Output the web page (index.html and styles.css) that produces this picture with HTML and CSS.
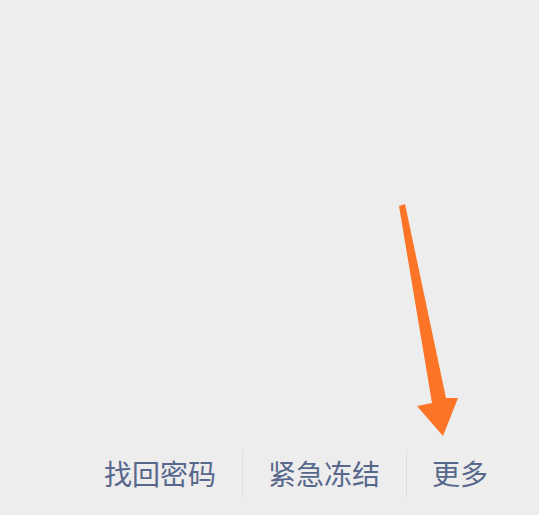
FILE: index.html
```html
<!DOCTYPE html>
<html lang="zh">
<head>
<meta charset="utf-8">
<link rel="stylesheet" href="styles.css">
</head>
<body>
<div class="page">
  <div class="spacer"></div>
  <nav class="links">
    <a class="link">找回密码</a>
    <a class="link">紧急冻结</a>
    <a class="link">更多</a>
  </nav>
  <svg class="arrow" width="539" height="515" viewBox="0 0 539 515">
    <polygon points="399,206 405,204 446,398 458,398 443,436 417,406 432,403" fill="#fc7526"/>
  </svg>
</div>
</body>
</html>
```
FILE: styles.css
```css
html, body {
  margin: 0;
  padding: 0;
  background: #ededed;
}
.page {
  position: relative;
  width: 539px;
  height: 515px;
  display: flex;
  flex-direction: column;
  overflow: hidden;
}
.spacer {
  flex: 1;
}
.links {
  display: flex;
  justify-content: flex-end;
  padding: 0 51px 18px 0;
}
.link {
  font-family: "Noto Sans CJK SC", "Noto Sans", sans-serif;
  font-size: 28px;
  line-height: 47px;
  height: 47px;
  color: #58688c;
  padding: 0 26px 0 25px;
  border-left: 1px solid #dedede;
}
.link:first-child {
  border-left: none;
}
.link:last-child {
  padding-right: 0;
}
.arrow {
  position: absolute;
  left: 0;
  top: 0;
}
```
